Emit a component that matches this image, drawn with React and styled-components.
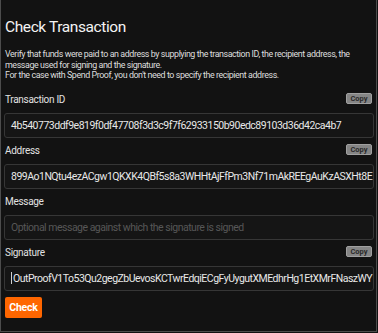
import React from 'react';
import styled, { createGlobalStyle } from 'styled-components';

const GlobalStyle = createGlobalStyle`
  html, body {
    margin: 0;
    padding: 0;
    background: #121212;
  }
  * {
    box-sizing: border-box;
  }
`;

const Frame = styled.div`
  width: 377px;
  height: 332px;
  border: 1px solid #4c4c4c;
  border-top: none;
  background: #121212;
  color: #e6e6e6;
  font-family: Roboto, "Liberation Sans", Arial, sans-serif;
  padding: 0 2px 0 3px;
  overflow: hidden;
`;

const Title = styled.h2`
  margin: 0;
  padding-top: 18px;
  padding-left: 1px;
  font-size: 15.5px;
  line-height: 18px;
  font-weight: 400;
  letter-spacing: -0.4px;
  color: #f4f4f4;
`;

const Intro = styled.p`
  margin: 13px 0 0 1px;
  font-size: 8.9px;
  line-height: 10.5px;
  letter-spacing: -0.42px;
  color: #dedede;
`;

const Field = styled.div`
  margin-top: ${(p) => p.$top}px;
`;

const LabelRow = styled.div`
  display: flex;
  align-items: center;
  justify-content: space-between;
  height: 18px;
  margin-bottom: 4px;
  padding: 0 2px 0 1px;
`;

const Label = styled.label`
  font-size: 10px;
  letter-spacing: -0.3px;
  color: #e2e2e2;
`;

const CopyButton = styled.button`
  align-self: flex-start;
  margin-top: 2px;
  font-family: Roboto, "Liberation Sans", Arial, sans-serif;
  font-size: 7.5px;
  font-weight: 700;
  color: #2a2a2a;
  background: #858585;
  border: 1px solid #a0a0a0;
  border-radius: 2px;
  width: 26px;
  height: 11px;
  padding: 0;
  line-height: 9px;
`;

const Input = styled.div`
  height: 25px;
  border: 1px solid #363636;
  border-radius: 3px;
  background: #151515;
  display: flex;
  align-items: center;
  padding: 0 6px;
  font-size: 10.5px;
  letter-spacing: -0.5px;
  white-space: nowrap;
  overflow: hidden;
  color: ${(p) => (p.$placeholder ? '#575757' : '#e8e8e8')};
`;

const Caret = styled.span`
  display: inline-block;
  flex: none;
  width: 1px;
  height: 12px;
  background: #d0d0d0;
  margin-right: 1px;
`;

const CheckButton = styled.button`
  display: block;
  margin: 6px 0 0 1px;
  font-family: Roboto, "Liberation Sans", Arial, sans-serif;
  font-size: 10.5px;
  font-weight: 700;
  letter-spacing: -0.2px;
  color: #fff;
  background: #ff6600;
  border: none;
  border-radius: 2px;
  width: 37px;
  height: 21px;
  padding: 0;
`;

const fields = [
  {
    label: 'Transaction ID',
    value: '4b540773ddf9e819f0df47708f3d3c9f7f62933150b90edc89103d36d42ca4b7',
    copy: true,
    top: 10,
  },
  {
    label: 'Address',
    value: '899Ao1NQtu4ezACgw1QKXK4QBf5s8a3WHHtAjFfPm3Nf71mAkREEgAuKzASXHt8E',
    copy: true,
    top: 4,
  },
  {
    label: 'Message',
    placeholder: 'Optional message against which the signature is signed',
    top: 4,
  },
  {
    label: 'Signature',
    value: 'OutProofV1To53Qu2gegZbUevosKCTwrEdqiECgFyUygutXMEdhrHg1EtXMrFNaszWY',
    copy: true,
    caret: true,
    top: 4,
  },
];

const App = () => (
  <>
    <GlobalStyle />
    <Frame>
      <Title>Check Transaction</Title>
      <Intro>
        Verify that funds were paid to an address by supplying the transaction ID, the recipient address, the
        message used for signing and the signature.
        <br />
        For the case with Spend Proof, you don't need to specify the recipient address.
      </Intro>
      {fields.map((f) => (
        <Field key={f.label} $top={f.top}>
          <LabelRow>
            <Label>{f.label}</Label>
            {f.copy && <CopyButton>Copy</CopyButton>}
          </LabelRow>
          <Input $placeholder={!f.value}>
            {f.caret && <Caret />}
            {f.value || f.placeholder}
          </Input>
        </Field>
      ))}
      <CheckButton>Check</CheckButton>
    </Frame>
  </>
);

export default App;
